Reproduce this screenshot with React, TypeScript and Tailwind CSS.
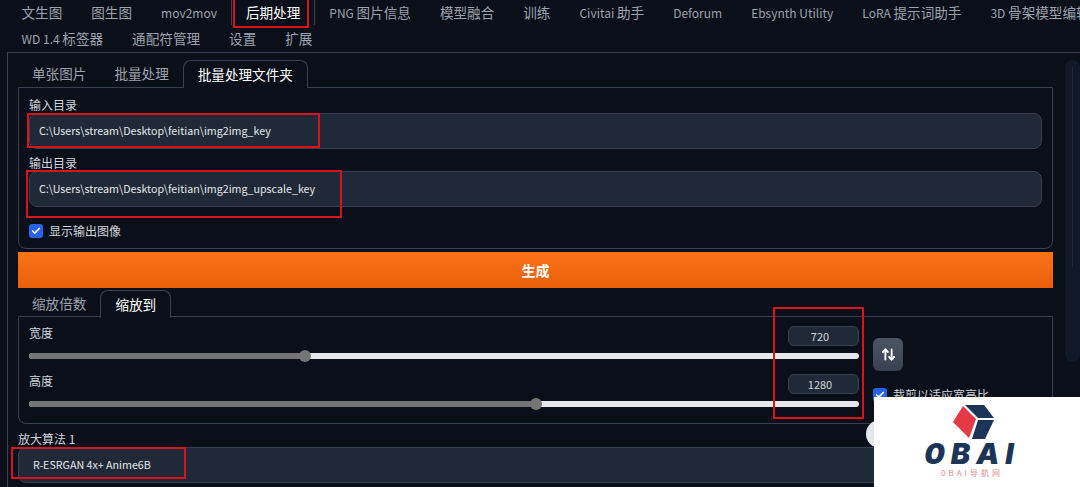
import { ArrowUpDown, Check } from "lucide-react";

const mainTabs = [
  { latin: "", cjk: "文生图" },
  { latin: "", cjk: "图生图" },
  { latin: "mov2mov", cjk: "" },
  { latin: "", cjk: "后期处理", active: true },
  { latin: "PNG ", cjk: "图片信息" },
  { latin: "", cjk: "模型融合" },
  { latin: "", cjk: "训练" },
  { latin: "Civitai ", cjk: "助手" },
  { latin: "Deforum", cjk: "" },
  { latin: "Ebsynth Utility", cjk: "" },
  { latin: "LoRA ", cjk: "提示词助手" },
  { latin: "3D ", cjk: "骨架模型编辑" },
];

const moreTabs = [
  { latin: "WD 1.4 ", cjk: "标签器" },
  { latin: "", cjk: "通配符管理" },
  { latin: "", cjk: "设置" },
  { latin: "", cjk: "扩展" },
];

function TabLabel({ latin, cjk }: { latin: string; cjk: string }) {
  return (
    <>
      {latin && <span className="whitespace-pre text-[12px]">{latin}</span>}
      {cjk}
    </>
  );
}

function SubTab({ label, active }: { label: string; active?: boolean }) {
  if (active) {
    return (
      <div className="relative z-10 -mb-px flex h-[28px] items-center rounded-t-lg border border-b-0 border-[#374151] bg-[#0b0f19] px-[14px] text-white">
        {label}
      </div>
    );
  }
  return <div className="flex h-[27px] items-center px-[14px] text-[#9ca3af]">{label}</div>;
}

function PathField({ label, value }: { label: string; value: string }) {
  return (
    <div>
      <div className="flex h-[22px] items-end pb-[2px] text-[12px] leading-none text-[#d1d5db]">{label}</div>
      <div className="flex h-[36px] items-center rounded-lg border border-[#374151] bg-[#1f2937] pl-[9px] text-[10.7px] text-[#e5e7eb]">
        {value}
      </div>
    </div>
  );
}

function Slider({ label, value, thumb }: { label: string; value: string; thumb: string }) {
  return (
    <div>
      <div className="flex h-[20px] items-start justify-between">
        <span className="text-[12px] leading-[14px] text-[#d1d5db]">{label}</span>
        <div className="flex h-[20px] w-[71px] items-center justify-center rounded-md border border-[#374151] bg-[#1f2937] pr-[7px] text-[11px] text-[#d1d5db]">
          {value}
        </div>
      </div>
      <div className="relative mt-[7px] h-[6px] rounded-full bg-[#e5e7eb]">
        <div className={`absolute left-0 top-0 h-[6px] rounded-full bg-[#757575] ${thumb}`}>
          <div className="absolute -right-[6px] -top-[3px] size-[12px] rounded-full bg-[#757575]" />
        </div>
      </div>
    </div>
  );
}

function CheckBox() {
  return (
    <div className="flex size-[14px] items-center justify-center rounded-[3px] bg-[#2563eb]">
      <Check size={10} strokeWidth={4} className="text-white" />
    </div>
  );
}

function Logo() {
  return (
    <div className="absolute bottom-0 left-[874px] top-[397px] flex w-[206px] flex-col items-center bg-white pr-[10px] pt-[8px]">
      <svg width="44" height="36" viewBox="0 0 44 36">
        <polygon points="13,1 26,14 19,33 3,17" fill="#e63946" />
        <polygon points="15,0 34,0 44,13 28,13" fill="#1c3557" />
        <polygon points="28,15 44,15 35,34 22,34" fill="#1c3557" />
      </svg>
      <div className="mt-[-2px] font-['Inter',sans-serif] text-[29px] font-black italic leading-[29px] tracking-[6px] text-[#1c3557]">
        0BAI
      </div>
      <div className="text-[8px] leading-[9px] tracking-[3px] text-[#e58a92]">0BAI导航网</div>
    </div>
  );
}

export default function App() {
  return (
    <div className="relative h-[487px] w-[1080px] overflow-hidden bg-[#0b0f19] font-['Noto_Sans_CJK_SC','Noto_Sans',sans-serif] text-[13.6px]">
      <nav className="h-[52px] pl-[7px]">
        <div className="flex h-[25px] items-center whitespace-nowrap">
          {mainTabs.map((t) => (
            <div
              key={t.latin + t.cjk}
              className={
                t.active
                  ? "flex h-[25px] items-center border-x border-[#374151] px-[13.5px] text-white"
                  : "flex h-[25px] items-center px-[14.5px] text-[#9ca3af]"
              }
            >
              <TabLabel latin={t.latin} cjk={t.cjk} />
            </div>
          ))}
        </div>
        <div className="flex h-[27px] items-center whitespace-nowrap">
          {moreTabs.map((t) => (
            <div key={t.latin + t.cjk} className="px-[14.5px] text-[#9ca3af]">
              <TabLabel latin={t.latin} cjk={t.cjk} />
            </div>
          ))}
        </div>
      </nav>

      <div className="ml-[7px] flex h-[435px] border-l border-t border-[#374151] pl-[10px]">
        <main className="w-[1035px] shrink-0 pt-[7px]">
          <div className="flex h-[27px]">
            <SubTab label="单张图片" />
            <SubTab label="批量处理" />
            <SubTab label="批量处理文件夹" active />
          </div>
          <section className="h-[162px] rounded-b-lg border border-[#374151] px-[10px] pt-[3px]">
            <PathField label="输入目录" value="C:\Users\stream\Desktop\feitian\img2img_key" />
            <PathField label="输出目录" value="C:\Users\stream\Desktop\feitian\img2img_upscale_key" />
            <div className="mt-[17px] flex items-center gap-[6px] text-[12px] leading-[14px] text-[#d1d5db]">
              <CheckBox />
              显示输出图像
            </div>
          </section>

          <button className="mt-[3px] h-[36px] w-full bg-gradient-to-b from-[#f97316] to-[#ea5f0c] text-[14px] font-bold text-white">
            生成
          </button>

          <div className="mt-[2px] flex h-[26px]">
            <SubTab label="缩放倍数" />
            <SubTab label="缩放到" active />
          </div>
          <section className="flex h-[108px] rounded-b-lg border border-[#374151] pl-[10px] pt-[9px]">
            <div className="flex w-[830px] flex-col gap-[15px]">
              <Slider label="宽度" value="720" thumb="w-[276px]" />
              <Slider label="高度" value="1280" thumb="w-[507px]" />
            </div>
            <div className="ml-[14px] pt-[12px]">
              <button className="flex h-[33px] w-[30px] items-center justify-center rounded-md bg-gradient-to-b from-[#4b5563] to-[#374151] text-white">
                <ArrowUpDown size={15} strokeWidth={3} />
              </button>
              <div className="mt-[17px] flex items-center gap-[6px] whitespace-nowrap text-[12px] leading-[14px] text-[#d1d5db]">
                <CheckBox />
                裁剪以适应宽高比
              </div>
            </div>
          </section>

          <div className="flex h-[23px] items-center pt-[6px] text-[12px] text-[#d1d5db]">放大算法 1</div>
          <div className="flex h-[36px] items-center rounded-lg border border-[#374151] bg-[#1f2937] pl-[14px] text-[10.7px] text-[#e5e7eb]">
            R-ESRGAN 4x+ Anime6B
          </div>
        </main>

        <aside className="ml-[12px] mt-[7px] h-[302px] w-[30px] rounded-lg bg-[#111827] px-[7px] pt-[7px]">
          <div className="h-[200px] bg-[#1f2937]" />
        </aside>
      </div>

      <div className="absolute left-[233px] top-[-2px] h-[30px] w-[76px] border-2 border-[#d8131d]" />
      <div className="absolute left-[27px] top-[113px] h-[35px] w-[293px] border-2 border-[#d8131d]" />
      <div className="absolute left-[26px] top-[170px] h-[48px] w-[316px] border-2 border-[#d8131d]" />
      <div className="absolute left-[773px] top-[307px] h-[112px] w-[91px] border-2 border-[#d8131d]" />
      <div className="absolute left-[11px] top-[447px] h-[32px] w-[175px] border-2 border-[#d8131d]" />

      <div className="absolute left-[866px] top-[420px] size-[28px] rounded-full bg-[#e5e7eb]" />
      <Logo />
    </div>
  );
}
